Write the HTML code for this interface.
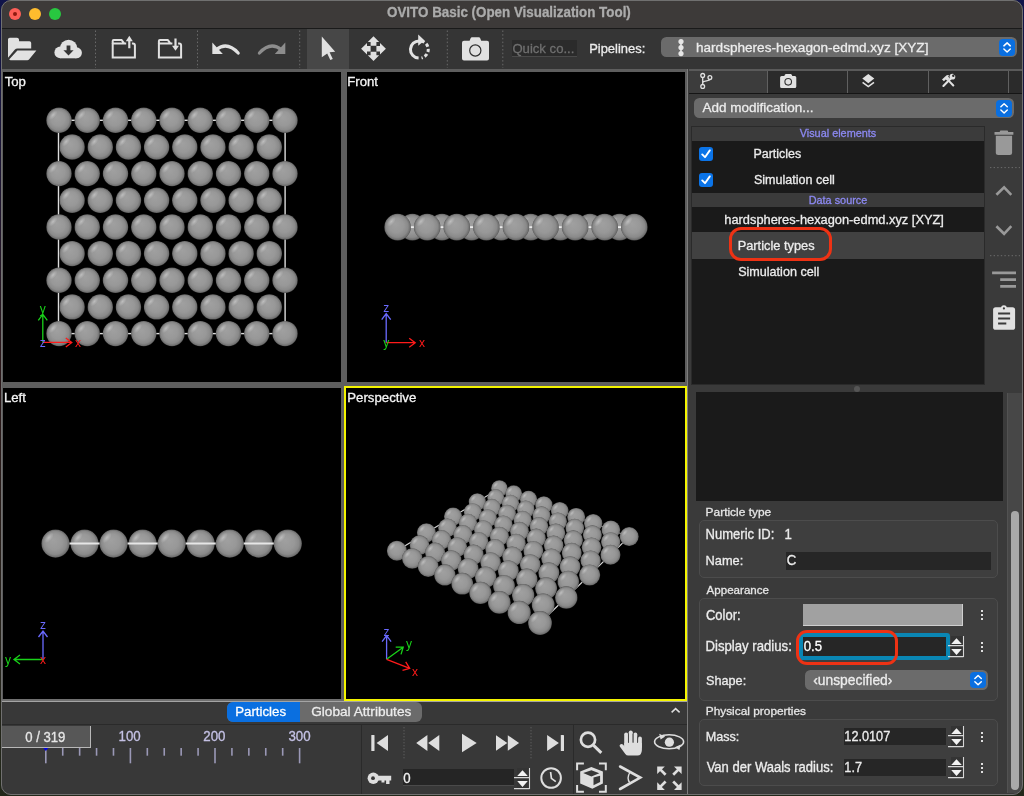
<!DOCTYPE html>
<html><head><meta charset="utf-8"><style>
html,body{margin:0;padding:0;width:1024px;height:796px;overflow:hidden;background:linear-gradient(180deg,#10144a 0%,#2a1618 45%,#22281a 100%)}
.r{position:absolute}
.t{position:absolute;white-space:nowrap;font-family:"Liberation Sans", sans-serif;line-height:16px;-webkit-text-stroke:0.3px currentColor}
#win{position:absolute;left:0;top:0;width:1024px;height:796px;overflow:hidden;border-radius:10px;will-change:transform;clip-path:inset(0 1px 1px 1px round 10px)}
</style></head><body>
<div id="win"><div class="r" style="left:0px;top:0px;width:1024px;height:28px;background:#3d3a39;"></div><div class="r" style="left:0px;top:28px;width:1024px;height:1px;background:#1a1a1a;"></div><div class="r" style="left:9px;top:8px;width:12px;height:12px;border-radius:50%;background:#fe5f57"></div><div class="r" style="left:13px;top:12px;width:4px;height:4px;border-radius:50%;background:#8f1a10"></div><div class="r" style="left:29px;top:8px;width:12px;height:12px;border-radius:50%;background:#febc2e"></div><div class="r" style="left:49px;top:8px;width:12px;height:12px;border-radius:50%;background:#28c840"></div><div class="t" style="left:387.05px;top:5.36px;font-size:13.38px;color:#ababab;font-weight:bold;transform-origin:0 12.64px;transform:scaleY(1.05);">OVITO Basic (Open Visualization Tool)</div><div class="r" style="left:0px;top:29px;width:1024px;height:40px;background:#353535;"></div><svg class="r" style="left:0;top:29px" width="520" height="40" viewBox="0 29 520 40"><path d="M95.5,30.5 L95.5,68" stroke="#6a6a6a" stroke-width="1" stroke-dasharray="1.5 2.2"/><path d="M197.5,30.5 L197.5,68" stroke="#6a6a6a" stroke-width="1" stroke-dasharray="1.5 2.2"/><path d="M299.7,30.5 L299.7,68" stroke="#6a6a6a" stroke-width="1" stroke-dasharray="1.5 2.2"/><path d="M447.3,30.5 L447.3,68" stroke="#6a6a6a" stroke-width="1" stroke-dasharray="1.5 2.2"/><path d="M502.8,30.5 L502.8,68" stroke="#6a6a6a" stroke-width="1" stroke-dasharray="1.5 2.2"/></svg><div class="r" style="left:307px;top:29px;width:41.8px;height:40px;background:#474747;"></div><svg class="r" style="left:0;top:0" width="1024" height="70" viewBox="0 0 1024 70"><path d="M8,39.6 Q8,37.8 9.8,37.8 L17,37.8 Q18.8,37.8 19,39.6 L19.1,41.2 L29.4,41.2 Q31.2,41.2 31.2,43 L31.2,48.4 L17.6,48.4 Q15.8,48.4 14.7,49.8 L8,57.8 Z" fill="#e1e1e1"/><path d="M17.4,50.4 L36.4,50.4 L29.2,59.3 Q28.5,60.2 27.3,60.2 L10.6,60.2 Q8.6,60.2 9.8,58.8 Z" fill="#e1e1e1"/><g fill="#e1e1e1"><circle cx="60.3" cy="52.4" r="5.9"/><circle cx="68.6" cy="48.4" r="8.7"/><circle cx="76.4" cy="52.8" r="5.5"/><rect x="60.3" y="48" width="16.1" height="10.3"/></g><path d="M66.6,45.6 L70.4,45.6 L70.4,50.2 L73.6,50.2 L68.5,55.6 L63.4,50.2 L66.6,50.2 Z" fill="#353535"/><path d="M112.7,43.6 L112.7,57.6 L134.9,57.6 L134.9,45.6 Q134.9,43.6 132.9,43.6 L131.9,43.6" fill="none" stroke="#e1e1e1" stroke-width="2"/><path d="M112.7,44 L112.7,41 Q112.7,40.1 113.7,40.1 L121.7,40.1 L124.3,43.6 L112.7,43.6 M124.3,43.6 L126.2,43.6" fill="none" stroke="#e1e1e1" stroke-width="2" stroke-linejoin="round"/><path d="M129.3,48.2 L129.3,39" stroke="#e1e1e1" stroke-width="2.2"/><path d="M125.8,41.2 L129.3,35.8 L132.8,41.2 Z" fill="#e1e1e1"/><path d="M158.9,43.6 L158.9,57.6 L181.1,57.6 L181.1,45.6 Q181.1,43.6 179.1,43.6 L178.1,43.6" fill="none" stroke="#e1e1e1" stroke-width="2"/><path d="M158.9,44 L158.9,41 Q158.9,40.1 159.9,40.1 L167.9,40.1 L170.5,43.6 L158.9,43.6 M170.5,43.6 L172.4,43.6" fill="none" stroke="#e1e1e1" stroke-width="2" stroke-linejoin="round"/><path d="M175.5,38.5 L175.5,47" stroke="#e1e1e1" stroke-width="2.2"/><path d="M172,45.8 L175.5,50.8 L179,45.8 Z" fill="#e1e1e1"/><path d="M212.3,42.6 L212.3,54.1 L222.8,54.1 Z" fill="#e1e1e1"/><path d="M216.5,49.6 Q227,41 238.2,53" fill="none" stroke="#e1e1e1" stroke-width="3.2" stroke-linecap="round"/><g transform="translate(497.59999999999997,0) scale(-1,1)"><path d="M212.3,42.6 L212.3,54.1 L222.8,54.1 Z" fill="#8d8d8d"/><path d="M216.5,49.6 Q227,41 238.2,53" fill="none" stroke="#8d8d8d" stroke-width="3.2" stroke-linecap="round"/></g><path d="M321.8,36.6 L335.2,51.8 L329.6,52.3 L332.8,58.9 L330.3,60.1 L327.2,53.5 L321.8,57.2 Z" fill="#e1e1e1"/><path d="M373.5,36.3 L379.2,42.1 L376.4,42.1 L376.4,45.7 L370.6,45.7 L370.6,42.1 L367.8,42.1 Z M373.5,61.1 L379.2,55.3 L376.4,55.3 L376.4,51.7 L370.6,51.7 L370.6,55.3 L367.8,55.3 Z M361.1,48.7 L367,43 L367,45.9 L370.6,45.9 L370.6,51.5 L367,51.5 L367,54.4 Z M385.9,48.7 L380,43 L380,45.9 L376.4,45.9 L376.4,51.5 L380,51.5 L380,54.4 Z" fill="#e1e1e1"/><path d="M418.6,58.1 A8.6,8.6 0 0 1 419.5,40.9" fill="none" stroke="#e1e1e1" stroke-width="3"/><path d="M421.5,41.1 A8.6,8.6 0 0 1 421.5,57.9" fill="none" stroke="#e1e1e1" stroke-width="3" stroke-dasharray="3.2 2.2"/><path d="M418.2,34.4 L424.6,40.6 L418.2,45.8 Z" fill="#e1e1e1"/><path d="M464,40.8 L469.6,40.8 L470.6,38.2 Q471,37.2 472,37.2 L478.8,37.2 Q479.8,37.2 480.2,38.2 L481.2,40.8 L487,40.8 Q489,40.8 489,42.8 L489,58.5 Q489,60.5 487,60.5 L464,60.5 Q462,60.5 462,58.5 L462,42.8 Q462,40.8 464,40.8 Z" fill="#e1e1e1"/><circle cx="475.3" cy="50.5" r="5.6" fill="none" stroke="#2e2e2e" stroke-width="1.2"/></svg><div class="r" style="left:0px;top:69px;width:1024px;height:727px;background:#383838;"></div><div class="r" style="left:1px;top:69px;width:687px;height:633px;background:#5e5e5e;"></div><div class="r" style="left:1px;top:698.8px;width:686px;height:1.8px;background:#707070;"></div><div class="r" style="left:1px;top:700.6px;width:686px;height:1.4px;background:#a4a4a4;"></div><div class="r" style="left:3px;top:72px;width:338px;height:310px;background:#000;"></div><div class="r" style="left:347px;top:72px;width:338px;height:310px;background:#000;"></div><div class="r" style="left:3px;top:388px;width:338px;height:310.8px;background:#000;"></div><div class="r" style="left:344px;top:386px;width:343px;height:315px;background:#000;box-sizing:border-box;border:2px solid #f4f400"></div><svg class="r" style="left:0;top:0" width="1024" height="796" viewBox="0 0 1024 796"><defs>
<radialGradient id="sg" cx="0.5" cy="0.5" r="0.5" fx="0.4" fy="0.36">
<stop offset="0" stop-color="#a0a0a0"/>
<stop offset="0.55" stop-color="#989898"/>
<stop offset="0.82" stop-color="#8a8a8a"/>
<stop offset="0.95" stop-color="#707070"/>
<stop offset="1" stop-color="#505050"/>
</radialGradient>
<radialGradient id="hl" cx="0.5" cy="0.5" r="0.5">
<stop offset="0" stop-color="#ffffff" stop-opacity="0.36"/>
<stop offset="0.45" stop-color="#ffffff" stop-opacity="0.18"/>
<stop offset="1" stop-color="#ffffff" stop-opacity="0"/>
</radialGradient>
</defs><clipPath id="c1"><rect x="3" y="72" width="338" height="310"/></clipPath><clipPath id="c2"><rect x="347" y="72" width="338" height="310"/></clipPath><clipPath id="c3"><rect x="3" y="388" width="338" height="310"/></clipPath><clipPath id="c4"><rect x="346" y="388" width="339" height="311"/></clipPath><g clip-path="url(#c1)"><rect x="58.5" y="120.3" width="226.6" height="213.3" fill="none" stroke="#dcdcdc" stroke-width="1.4"/><g transform="translate(59.00,120.30) scale(12.700)"><circle r="1" fill="url(#sg)"/><ellipse cx="-0.47" cy="-0.42" rx="0.46" ry="0.23" transform="rotate(-50 -0.47 -0.42)" fill="url(#hl)"/></g><g transform="translate(87.25,120.30) scale(12.700)"><circle r="1" fill="url(#sg)"/><ellipse cx="-0.47" cy="-0.42" rx="0.46" ry="0.23" transform="rotate(-50 -0.47 -0.42)" fill="url(#hl)"/></g><g transform="translate(115.50,120.30) scale(12.700)"><circle r="1" fill="url(#sg)"/><ellipse cx="-0.47" cy="-0.42" rx="0.46" ry="0.23" transform="rotate(-50 -0.47 -0.42)" fill="url(#hl)"/></g><g transform="translate(143.75,120.30) scale(12.700)"><circle r="1" fill="url(#sg)"/><ellipse cx="-0.47" cy="-0.42" rx="0.46" ry="0.23" transform="rotate(-50 -0.47 -0.42)" fill="url(#hl)"/></g><g transform="translate(172.00,120.30) scale(12.700)"><circle r="1" fill="url(#sg)"/><ellipse cx="-0.47" cy="-0.42" rx="0.46" ry="0.23" transform="rotate(-50 -0.47 -0.42)" fill="url(#hl)"/></g><g transform="translate(200.25,120.30) scale(12.700)"><circle r="1" fill="url(#sg)"/><ellipse cx="-0.47" cy="-0.42" rx="0.46" ry="0.23" transform="rotate(-50 -0.47 -0.42)" fill="url(#hl)"/></g><g transform="translate(228.50,120.30) scale(12.700)"><circle r="1" fill="url(#sg)"/><ellipse cx="-0.47" cy="-0.42" rx="0.46" ry="0.23" transform="rotate(-50 -0.47 -0.42)" fill="url(#hl)"/></g><g transform="translate(256.75,120.30) scale(12.700)"><circle r="1" fill="url(#sg)"/><ellipse cx="-0.47" cy="-0.42" rx="0.46" ry="0.23" transform="rotate(-50 -0.47 -0.42)" fill="url(#hl)"/></g><g transform="translate(285.00,120.30) scale(12.700)"><circle r="1" fill="url(#sg)"/><ellipse cx="-0.47" cy="-0.42" rx="0.46" ry="0.23" transform="rotate(-50 -0.47 -0.42)" fill="url(#hl)"/></g><g transform="translate(72.10,146.96) scale(12.700)"><circle r="1" fill="url(#sg)"/><ellipse cx="-0.47" cy="-0.42" rx="0.46" ry="0.23" transform="rotate(-50 -0.47 -0.42)" fill="url(#hl)"/></g><g transform="translate(100.27,146.96) scale(12.700)"><circle r="1" fill="url(#sg)"/><ellipse cx="-0.47" cy="-0.42" rx="0.46" ry="0.23" transform="rotate(-50 -0.47 -0.42)" fill="url(#hl)"/></g><g transform="translate(128.44,146.96) scale(12.700)"><circle r="1" fill="url(#sg)"/><ellipse cx="-0.47" cy="-0.42" rx="0.46" ry="0.23" transform="rotate(-50 -0.47 -0.42)" fill="url(#hl)"/></g><g transform="translate(156.61,146.96) scale(12.700)"><circle r="1" fill="url(#sg)"/><ellipse cx="-0.47" cy="-0.42" rx="0.46" ry="0.23" transform="rotate(-50 -0.47 -0.42)" fill="url(#hl)"/></g><g transform="translate(184.78,146.96) scale(12.700)"><circle r="1" fill="url(#sg)"/><ellipse cx="-0.47" cy="-0.42" rx="0.46" ry="0.23" transform="rotate(-50 -0.47 -0.42)" fill="url(#hl)"/></g><g transform="translate(212.95,146.96) scale(12.700)"><circle r="1" fill="url(#sg)"/><ellipse cx="-0.47" cy="-0.42" rx="0.46" ry="0.23" transform="rotate(-50 -0.47 -0.42)" fill="url(#hl)"/></g><g transform="translate(241.12,146.96) scale(12.700)"><circle r="1" fill="url(#sg)"/><ellipse cx="-0.47" cy="-0.42" rx="0.46" ry="0.23" transform="rotate(-50 -0.47 -0.42)" fill="url(#hl)"/></g><g transform="translate(269.29,146.96) scale(12.700)"><circle r="1" fill="url(#sg)"/><ellipse cx="-0.47" cy="-0.42" rx="0.46" ry="0.23" transform="rotate(-50 -0.47 -0.42)" fill="url(#hl)"/></g><g transform="translate(59.00,173.62) scale(12.700)"><circle r="1" fill="url(#sg)"/><ellipse cx="-0.47" cy="-0.42" rx="0.46" ry="0.23" transform="rotate(-50 -0.47 -0.42)" fill="url(#hl)"/></g><g transform="translate(87.25,173.62) scale(12.700)"><circle r="1" fill="url(#sg)"/><ellipse cx="-0.47" cy="-0.42" rx="0.46" ry="0.23" transform="rotate(-50 -0.47 -0.42)" fill="url(#hl)"/></g><g transform="translate(115.50,173.62) scale(12.700)"><circle r="1" fill="url(#sg)"/><ellipse cx="-0.47" cy="-0.42" rx="0.46" ry="0.23" transform="rotate(-50 -0.47 -0.42)" fill="url(#hl)"/></g><g transform="translate(143.75,173.62) scale(12.700)"><circle r="1" fill="url(#sg)"/><ellipse cx="-0.47" cy="-0.42" rx="0.46" ry="0.23" transform="rotate(-50 -0.47 -0.42)" fill="url(#hl)"/></g><g transform="translate(172.00,173.62) scale(12.700)"><circle r="1" fill="url(#sg)"/><ellipse cx="-0.47" cy="-0.42" rx="0.46" ry="0.23" transform="rotate(-50 -0.47 -0.42)" fill="url(#hl)"/></g><g transform="translate(200.25,173.62) scale(12.700)"><circle r="1" fill="url(#sg)"/><ellipse cx="-0.47" cy="-0.42" rx="0.46" ry="0.23" transform="rotate(-50 -0.47 -0.42)" fill="url(#hl)"/></g><g transform="translate(228.50,173.62) scale(12.700)"><circle r="1" fill="url(#sg)"/><ellipse cx="-0.47" cy="-0.42" rx="0.46" ry="0.23" transform="rotate(-50 -0.47 -0.42)" fill="url(#hl)"/></g><g transform="translate(256.75,173.62) scale(12.700)"><circle r="1" fill="url(#sg)"/><ellipse cx="-0.47" cy="-0.42" rx="0.46" ry="0.23" transform="rotate(-50 -0.47 -0.42)" fill="url(#hl)"/></g><g transform="translate(285.00,173.62) scale(12.700)"><circle r="1" fill="url(#sg)"/><ellipse cx="-0.47" cy="-0.42" rx="0.46" ry="0.23" transform="rotate(-50 -0.47 -0.42)" fill="url(#hl)"/></g><g transform="translate(72.10,200.28) scale(12.700)"><circle r="1" fill="url(#sg)"/><ellipse cx="-0.47" cy="-0.42" rx="0.46" ry="0.23" transform="rotate(-50 -0.47 -0.42)" fill="url(#hl)"/></g><g transform="translate(100.27,200.28) scale(12.700)"><circle r="1" fill="url(#sg)"/><ellipse cx="-0.47" cy="-0.42" rx="0.46" ry="0.23" transform="rotate(-50 -0.47 -0.42)" fill="url(#hl)"/></g><g transform="translate(128.44,200.28) scale(12.700)"><circle r="1" fill="url(#sg)"/><ellipse cx="-0.47" cy="-0.42" rx="0.46" ry="0.23" transform="rotate(-50 -0.47 -0.42)" fill="url(#hl)"/></g><g transform="translate(156.61,200.28) scale(12.700)"><circle r="1" fill="url(#sg)"/><ellipse cx="-0.47" cy="-0.42" rx="0.46" ry="0.23" transform="rotate(-50 -0.47 -0.42)" fill="url(#hl)"/></g><g transform="translate(184.78,200.28) scale(12.700)"><circle r="1" fill="url(#sg)"/><ellipse cx="-0.47" cy="-0.42" rx="0.46" ry="0.23" transform="rotate(-50 -0.47 -0.42)" fill="url(#hl)"/></g><g transform="translate(212.95,200.28) scale(12.700)"><circle r="1" fill="url(#sg)"/><ellipse cx="-0.47" cy="-0.42" rx="0.46" ry="0.23" transform="rotate(-50 -0.47 -0.42)" fill="url(#hl)"/></g><g transform="translate(241.12,200.28) scale(12.700)"><circle r="1" fill="url(#sg)"/><ellipse cx="-0.47" cy="-0.42" rx="0.46" ry="0.23" transform="rotate(-50 -0.47 -0.42)" fill="url(#hl)"/></g><g transform="translate(269.29,200.28) scale(12.700)"><circle r="1" fill="url(#sg)"/><ellipse cx="-0.47" cy="-0.42" rx="0.46" ry="0.23" transform="rotate(-50 -0.47 -0.42)" fill="url(#hl)"/></g><g transform="translate(59.00,226.94) scale(12.700)"><circle r="1" fill="url(#sg)"/><ellipse cx="-0.47" cy="-0.42" rx="0.46" ry="0.23" transform="rotate(-50 -0.47 -0.42)" fill="url(#hl)"/></g><g transform="translate(87.25,226.94) scale(12.700)"><circle r="1" fill="url(#sg)"/><ellipse cx="-0.47" cy="-0.42" rx="0.46" ry="0.23" transform="rotate(-50 -0.47 -0.42)" fill="url(#hl)"/></g><g transform="translate(115.50,226.94) scale(12.700)"><circle r="1" fill="url(#sg)"/><ellipse cx="-0.47" cy="-0.42" rx="0.46" ry="0.23" transform="rotate(-50 -0.47 -0.42)" fill="url(#hl)"/></g><g transform="translate(143.75,226.94) scale(12.700)"><circle r="1" fill="url(#sg)"/><ellipse cx="-0.47" cy="-0.42" rx="0.46" ry="0.23" transform="rotate(-50 -0.47 -0.42)" fill="url(#hl)"/></g><g transform="translate(172.00,226.94) scale(12.700)"><circle r="1" fill="url(#sg)"/><ellipse cx="-0.47" cy="-0.42" rx="0.46" ry="0.23" transform="rotate(-50 -0.47 -0.42)" fill="url(#hl)"/></g><g transform="translate(200.25,226.94) scale(12.700)"><circle r="1" fill="url(#sg)"/><ellipse cx="-0.47" cy="-0.42" rx="0.46" ry="0.23" transform="rotate(-50 -0.47 -0.42)" fill="url(#hl)"/></g><g transform="translate(228.50,226.94) scale(12.700)"><circle r="1" fill="url(#sg)"/><ellipse cx="-0.47" cy="-0.42" rx="0.46" ry="0.23" transform="rotate(-50 -0.47 -0.42)" fill="url(#hl)"/></g><g transform="translate(256.75,226.94) scale(12.700)"><circle r="1" fill="url(#sg)"/><ellipse cx="-0.47" cy="-0.42" rx="0.46" ry="0.23" transform="rotate(-50 -0.47 -0.42)" fill="url(#hl)"/></g><g transform="translate(285.00,226.94) scale(12.700)"><circle r="1" fill="url(#sg)"/><ellipse cx="-0.47" cy="-0.42" rx="0.46" ry="0.23" transform="rotate(-50 -0.47 -0.42)" fill="url(#hl)"/></g><g transform="translate(72.10,253.60) scale(12.700)"><circle r="1" fill="url(#sg)"/><ellipse cx="-0.47" cy="-0.42" rx="0.46" ry="0.23" transform="rotate(-50 -0.47 -0.42)" fill="url(#hl)"/></g><g transform="translate(100.27,253.60) scale(12.700)"><circle r="1" fill="url(#sg)"/><ellipse cx="-0.47" cy="-0.42" rx="0.46" ry="0.23" transform="rotate(-50 -0.47 -0.42)" fill="url(#hl)"/></g><g transform="translate(128.44,253.60) scale(12.700)"><circle r="1" fill="url(#sg)"/><ellipse cx="-0.47" cy="-0.42" rx="0.46" ry="0.23" transform="rotate(-50 -0.47 -0.42)" fill="url(#hl)"/></g><g transform="translate(156.61,253.60) scale(12.700)"><circle r="1" fill="url(#sg)"/><ellipse cx="-0.47" cy="-0.42" rx="0.46" ry="0.23" transform="rotate(-50 -0.47 -0.42)" fill="url(#hl)"/></g><g transform="translate(184.78,253.60) scale(12.700)"><circle r="1" fill="url(#sg)"/><ellipse cx="-0.47" cy="-0.42" rx="0.46" ry="0.23" transform="rotate(-50 -0.47 -0.42)" fill="url(#hl)"/></g><g transform="translate(212.95,253.60) scale(12.700)"><circle r="1" fill="url(#sg)"/><ellipse cx="-0.47" cy="-0.42" rx="0.46" ry="0.23" transform="rotate(-50 -0.47 -0.42)" fill="url(#hl)"/></g><g transform="translate(241.12,253.60) scale(12.700)"><circle r="1" fill="url(#sg)"/><ellipse cx="-0.47" cy="-0.42" rx="0.46" ry="0.23" transform="rotate(-50 -0.47 -0.42)" fill="url(#hl)"/></g><g transform="translate(269.29,253.60) scale(12.700)"><circle r="1" fill="url(#sg)"/><ellipse cx="-0.47" cy="-0.42" rx="0.46" ry="0.23" transform="rotate(-50 -0.47 -0.42)" fill="url(#hl)"/></g><g transform="translate(59.00,280.26) scale(12.700)"><circle r="1" fill="url(#sg)"/><ellipse cx="-0.47" cy="-0.42" rx="0.46" ry="0.23" transform="rotate(-50 -0.47 -0.42)" fill="url(#hl)"/></g><g transform="translate(87.25,280.26) scale(12.700)"><circle r="1" fill="url(#sg)"/><ellipse cx="-0.47" cy="-0.42" rx="0.46" ry="0.23" transform="rotate(-50 -0.47 -0.42)" fill="url(#hl)"/></g><g transform="translate(115.50,280.26) scale(12.700)"><circle r="1" fill="url(#sg)"/><ellipse cx="-0.47" cy="-0.42" rx="0.46" ry="0.23" transform="rotate(-50 -0.47 -0.42)" fill="url(#hl)"/></g><g transform="translate(143.75,280.26) scale(12.700)"><circle r="1" fill="url(#sg)"/><ellipse cx="-0.47" cy="-0.42" rx="0.46" ry="0.23" transform="rotate(-50 -0.47 -0.42)" fill="url(#hl)"/></g><g transform="translate(172.00,280.26) scale(12.700)"><circle r="1" fill="url(#sg)"/><ellipse cx="-0.47" cy="-0.42" rx="0.46" ry="0.23" transform="rotate(-50 -0.47 -0.42)" fill="url(#hl)"/></g><g transform="translate(200.25,280.26) scale(12.700)"><circle r="1" fill="url(#sg)"/><ellipse cx="-0.47" cy="-0.42" rx="0.46" ry="0.23" transform="rotate(-50 -0.47 -0.42)" fill="url(#hl)"/></g><g transform="translate(228.50,280.26) scale(12.700)"><circle r="1" fill="url(#sg)"/><ellipse cx="-0.47" cy="-0.42" rx="0.46" ry="0.23" transform="rotate(-50 -0.47 -0.42)" fill="url(#hl)"/></g><g transform="translate(256.75,280.26) scale(12.700)"><circle r="1" fill="url(#sg)"/><ellipse cx="-0.47" cy="-0.42" rx="0.46" ry="0.23" transform="rotate(-50 -0.47 -0.42)" fill="url(#hl)"/></g><g transform="translate(285.00,280.26) scale(12.700)"><circle r="1" fill="url(#sg)"/><ellipse cx="-0.47" cy="-0.42" rx="0.46" ry="0.23" transform="rotate(-50 -0.47 -0.42)" fill="url(#hl)"/></g><g transform="translate(72.10,306.92) scale(12.700)"><circle r="1" fill="url(#sg)"/><ellipse cx="-0.47" cy="-0.42" rx="0.46" ry="0.23" transform="rotate(-50 -0.47 -0.42)" fill="url(#hl)"/></g><g transform="translate(100.27,306.92) scale(12.700)"><circle r="1" fill="url(#sg)"/><ellipse cx="-0.47" cy="-0.42" rx="0.46" ry="0.23" transform="rotate(-50 -0.47 -0.42)" fill="url(#hl)"/></g><g transform="translate(128.44,306.92) scale(12.700)"><circle r="1" fill="url(#sg)"/><ellipse cx="-0.47" cy="-0.42" rx="0.46" ry="0.23" transform="rotate(-50 -0.47 -0.42)" fill="url(#hl)"/></g><g transform="translate(156.61,306.92) scale(12.700)"><circle r="1" fill="url(#sg)"/><ellipse cx="-0.47" cy="-0.42" rx="0.46" ry="0.23" transform="rotate(-50 -0.47 -0.42)" fill="url(#hl)"/></g><g transform="translate(184.78,306.92) scale(12.700)"><circle r="1" fill="url(#sg)"/><ellipse cx="-0.47" cy="-0.42" rx="0.46" ry="0.23" transform="rotate(-50 -0.47 -0.42)" fill="url(#hl)"/></g><g transform="translate(212.95,306.92) scale(12.700)"><circle r="1" fill="url(#sg)"/><ellipse cx="-0.47" cy="-0.42" rx="0.46" ry="0.23" transform="rotate(-50 -0.47 -0.42)" fill="url(#hl)"/></g><g transform="translate(241.12,306.92) scale(12.700)"><circle r="1" fill="url(#sg)"/><ellipse cx="-0.47" cy="-0.42" rx="0.46" ry="0.23" transform="rotate(-50 -0.47 -0.42)" fill="url(#hl)"/></g><g transform="translate(269.29,306.92) scale(12.700)"><circle r="1" fill="url(#sg)"/><ellipse cx="-0.47" cy="-0.42" rx="0.46" ry="0.23" transform="rotate(-50 -0.47 -0.42)" fill="url(#hl)"/></g><g transform="translate(59.00,333.58) scale(12.700)"><circle r="1" fill="url(#sg)"/><ellipse cx="-0.47" cy="-0.42" rx="0.46" ry="0.23" transform="rotate(-50 -0.47 -0.42)" fill="url(#hl)"/></g><g transform="translate(87.25,333.58) scale(12.700)"><circle r="1" fill="url(#sg)"/><ellipse cx="-0.47" cy="-0.42" rx="0.46" ry="0.23" transform="rotate(-50 -0.47 -0.42)" fill="url(#hl)"/></g><g transform="translate(115.50,333.58) scale(12.700)"><circle r="1" fill="url(#sg)"/><ellipse cx="-0.47" cy="-0.42" rx="0.46" ry="0.23" transform="rotate(-50 -0.47 -0.42)" fill="url(#hl)"/></g><g transform="translate(143.75,333.58) scale(12.700)"><circle r="1" fill="url(#sg)"/><ellipse cx="-0.47" cy="-0.42" rx="0.46" ry="0.23" transform="rotate(-50 -0.47 -0.42)" fill="url(#hl)"/></g><g transform="translate(172.00,333.58) scale(12.700)"><circle r="1" fill="url(#sg)"/><ellipse cx="-0.47" cy="-0.42" rx="0.46" ry="0.23" transform="rotate(-50 -0.47 -0.42)" fill="url(#hl)"/></g><g transform="translate(200.25,333.58) scale(12.700)"><circle r="1" fill="url(#sg)"/><ellipse cx="-0.47" cy="-0.42" rx="0.46" ry="0.23" transform="rotate(-50 -0.47 -0.42)" fill="url(#hl)"/></g><g transform="translate(228.50,333.58) scale(12.700)"><circle r="1" fill="url(#sg)"/><ellipse cx="-0.47" cy="-0.42" rx="0.46" ry="0.23" transform="rotate(-50 -0.47 -0.42)" fill="url(#hl)"/></g><g transform="translate(256.75,333.58) scale(12.700)"><circle r="1" fill="url(#sg)"/><ellipse cx="-0.47" cy="-0.42" rx="0.46" ry="0.23" transform="rotate(-50 -0.47 -0.42)" fill="url(#hl)"/></g><g transform="translate(285.00,333.58) scale(12.700)"><circle r="1" fill="url(#sg)"/><ellipse cx="-0.47" cy="-0.42" rx="0.46" ry="0.23" transform="rotate(-50 -0.47 -0.42)" fill="url(#hl)"/></g><path d="M42.8,342.4 L42.8,314.4 M47.3,320.4 L42.8,314.4 L38.3,320.4" stroke="#19d219" stroke-width="1.3" fill="none"/><text x="42.8" y="313" fill="#19d219" font-size="12" font-family="Liberation Sans" text-anchor="middle">y</text><path d="M42.8,342.4 L71.8,342.4 M65.8,346.9 L71.8,342.4 L65.8,337.9" stroke="#ff1a1a" stroke-width="1.3" fill="none"/><text x="78" y="346.5" fill="#ff1a1a" font-size="12" font-family="Liberation Sans" text-anchor="middle">x</text><text x="42.8" y="346.5" fill="#6a6aff" font-size="12" font-family="Liberation Sans" text-anchor="middle">z</text></g><g clip-path="url(#c2)"><g transform="translate(412.39,227.10) scale(13.300)"><circle r="1" fill="url(#sg)"/><ellipse cx="-0.47" cy="-0.42" rx="0.46" ry="0.23" transform="rotate(-50 -0.47 -0.42)" fill="url(#hl)"/></g><g transform="translate(441.98,227.10) scale(13.300)"><circle r="1" fill="url(#sg)"/><ellipse cx="-0.47" cy="-0.42" rx="0.46" ry="0.23" transform="rotate(-50 -0.47 -0.42)" fill="url(#hl)"/></g><g transform="translate(471.57,227.10) scale(13.300)"><circle r="1" fill="url(#sg)"/><ellipse cx="-0.47" cy="-0.42" rx="0.46" ry="0.23" transform="rotate(-50 -0.47 -0.42)" fill="url(#hl)"/></g><g transform="translate(501.16,227.10) scale(13.300)"><circle r="1" fill="url(#sg)"/><ellipse cx="-0.47" cy="-0.42" rx="0.46" ry="0.23" transform="rotate(-50 -0.47 -0.42)" fill="url(#hl)"/></g><g transform="translate(530.74,227.10) scale(13.300)"><circle r="1" fill="url(#sg)"/><ellipse cx="-0.47" cy="-0.42" rx="0.46" ry="0.23" transform="rotate(-50 -0.47 -0.42)" fill="url(#hl)"/></g><g transform="translate(560.33,227.10) scale(13.300)"><circle r="1" fill="url(#sg)"/><ellipse cx="-0.47" cy="-0.42" rx="0.46" ry="0.23" transform="rotate(-50 -0.47 -0.42)" fill="url(#hl)"/></g><g transform="translate(589.92,227.10) scale(13.300)"><circle r="1" fill="url(#sg)"/><ellipse cx="-0.47" cy="-0.42" rx="0.46" ry="0.23" transform="rotate(-50 -0.47 -0.42)" fill="url(#hl)"/></g><g transform="translate(619.51,227.10) scale(13.300)"><circle r="1" fill="url(#sg)"/><ellipse cx="-0.47" cy="-0.42" rx="0.46" ry="0.23" transform="rotate(-50 -0.47 -0.42)" fill="url(#hl)"/></g><line x1="397.6" y1="227.1" x2="634.3" y2="227.1" stroke="#ececec" stroke-width="1.8"/><g transform="translate(397.60,227.10) scale(13.300)"><circle r="1" fill="url(#sg)"/><ellipse cx="-0.47" cy="-0.42" rx="0.46" ry="0.23" transform="rotate(-50 -0.47 -0.42)" fill="url(#hl)"/></g><g transform="translate(427.19,227.10) scale(13.300)"><circle r="1" fill="url(#sg)"/><ellipse cx="-0.47" cy="-0.42" rx="0.46" ry="0.23" transform="rotate(-50 -0.47 -0.42)" fill="url(#hl)"/></g><g transform="translate(456.77,227.10) scale(13.300)"><circle r="1" fill="url(#sg)"/><ellipse cx="-0.47" cy="-0.42" rx="0.46" ry="0.23" transform="rotate(-50 -0.47 -0.42)" fill="url(#hl)"/></g><g transform="translate(486.36,227.10) scale(13.300)"><circle r="1" fill="url(#sg)"/><ellipse cx="-0.47" cy="-0.42" rx="0.46" ry="0.23" transform="rotate(-50 -0.47 -0.42)" fill="url(#hl)"/></g><g transform="translate(515.95,227.10) scale(13.300)"><circle r="1" fill="url(#sg)"/><ellipse cx="-0.47" cy="-0.42" rx="0.46" ry="0.23" transform="rotate(-50 -0.47 -0.42)" fill="url(#hl)"/></g><g transform="translate(545.54,227.10) scale(13.300)"><circle r="1" fill="url(#sg)"/><ellipse cx="-0.47" cy="-0.42" rx="0.46" ry="0.23" transform="rotate(-50 -0.47 -0.42)" fill="url(#hl)"/></g><g transform="translate(575.12,227.10) scale(13.300)"><circle r="1" fill="url(#sg)"/><ellipse cx="-0.47" cy="-0.42" rx="0.46" ry="0.23" transform="rotate(-50 -0.47 -0.42)" fill="url(#hl)"/></g><g transform="translate(604.71,227.10) scale(13.300)"><circle r="1" fill="url(#sg)"/><ellipse cx="-0.47" cy="-0.42" rx="0.46" ry="0.23" transform="rotate(-50 -0.47 -0.42)" fill="url(#hl)"/></g><g transform="translate(634.30,227.10) scale(13.300)"><circle r="1" fill="url(#sg)"/><ellipse cx="-0.47" cy="-0.42" rx="0.46" ry="0.23" transform="rotate(-50 -0.47 -0.42)" fill="url(#hl)"/></g><path d="M386.2,342.7 L386.2,313.7 M390.7,319.7 L386.2,313.7 L381.7,319.7" stroke="#6a6aff" stroke-width="1.3" fill="none"/><text x="386.2" y="312" fill="#6a6aff" font-size="12" font-family="Liberation Sans" text-anchor="middle">z</text><path d="M386.2,342.7 L415.2,342.7 M409.2,347.2 L415.2,342.7 L409.2,338.2" stroke="#ff1a1a" stroke-width="1.3" fill="none"/><text x="422" y="347" fill="#ff1a1a" font-size="12" font-family="Liberation Sans" text-anchor="middle">x</text><text x="386.2" y="347" fill="#19d219" font-size="12" font-family="Liberation Sans" text-anchor="middle">y</text></g><g clip-path="url(#c3)"><g transform="translate(84.54,543.60) scale(14.100)"><circle r="1" fill="url(#sg)"/><ellipse cx="-0.47" cy="-0.42" rx="0.46" ry="0.23" transform="rotate(-50 -0.47 -0.42)" fill="url(#hl)"/></g><g transform="translate(142.61,543.60) scale(14.100)"><circle r="1" fill="url(#sg)"/><ellipse cx="-0.47" cy="-0.42" rx="0.46" ry="0.23" transform="rotate(-50 -0.47 -0.42)" fill="url(#hl)"/></g><g transform="translate(200.69,543.60) scale(14.100)"><circle r="1" fill="url(#sg)"/><ellipse cx="-0.47" cy="-0.42" rx="0.46" ry="0.23" transform="rotate(-50 -0.47 -0.42)" fill="url(#hl)"/></g><g transform="translate(258.76,543.60) scale(14.100)"><circle r="1" fill="url(#sg)"/><ellipse cx="-0.47" cy="-0.42" rx="0.46" ry="0.23" transform="rotate(-50 -0.47 -0.42)" fill="url(#hl)"/></g><line x1="55.5" y1="543.6" x2="287.8" y2="543.6" stroke="#e6e6e6" stroke-width="2"/><g transform="translate(55.50,543.60) scale(14.100)"><circle r="1" fill="url(#sg)"/><ellipse cx="-0.47" cy="-0.42" rx="0.46" ry="0.23" transform="rotate(-50 -0.47 -0.42)" fill="url(#hl)"/></g><g transform="translate(113.58,543.60) scale(14.100)"><circle r="1" fill="url(#sg)"/><ellipse cx="-0.47" cy="-0.42" rx="0.46" ry="0.23" transform="rotate(-50 -0.47 -0.42)" fill="url(#hl)"/></g><g transform="translate(171.65,543.60) scale(14.100)"><circle r="1" fill="url(#sg)"/><ellipse cx="-0.47" cy="-0.42" rx="0.46" ry="0.23" transform="rotate(-50 -0.47 -0.42)" fill="url(#hl)"/></g><g transform="translate(229.73,543.60) scale(14.100)"><circle r="1" fill="url(#sg)"/><ellipse cx="-0.47" cy="-0.42" rx="0.46" ry="0.23" transform="rotate(-50 -0.47 -0.42)" fill="url(#hl)"/></g><g transform="translate(287.80,543.60) scale(14.100)"><circle r="1" fill="url(#sg)"/><ellipse cx="-0.47" cy="-0.42" rx="0.46" ry="0.23" transform="rotate(-50 -0.47 -0.42)" fill="url(#hl)"/></g><path d="M43,659.5 L43.0,631.0 M47.5,637.0 L43.0,631.0 L38.5,637.0" stroke="#6a6aff" stroke-width="1.3" fill="none"/><text x="43" y="629" fill="#6a6aff" font-size="12" font-family="Liberation Sans" text-anchor="middle">z</text><path d="M43,659.5 L14.0,659.5 M20.0,655.0 L14.0,659.5 L20.0,664.0" stroke="#19d219" stroke-width="1.3" fill="none"/><text x="8" y="663.5" fill="#19d219" font-size="12" font-family="Liberation Sans" text-anchor="middle">y</text><text x="43" y="663.5" fill="#ff1a1a" font-size="12" font-family="Liberation Sans" text-anchor="middle">x</text></g><g clip-path="url(#c4)"><polygon points="396.9,550.7 540.0,623.0 629.2,536.6 499.4,488.4" fill="none" stroke="#d8d8d8" stroke-width="1.1"/><g transform="translate(499.40,488.40) scale(8.240)"><circle r="1" fill="url(#sg)"/><ellipse cx="-0.47" cy="-0.42" rx="0.46" ry="0.23" transform="rotate(-50 -0.47 -0.42)" fill="url(#hl)"/></g><g transform="translate(513.72,493.72) scale(8.379)"><circle r="1" fill="url(#sg)"/><ellipse cx="-0.47" cy="-0.42" rx="0.46" ry="0.23" transform="rotate(-50 -0.47 -0.42)" fill="url(#hl)"/></g><g transform="translate(495.76,497.72) scale(8.497)"><circle r="1" fill="url(#sg)"/><ellipse cx="-0.47" cy="-0.42" rx="0.46" ry="0.23" transform="rotate(-50 -0.47 -0.42)" fill="url(#hl)"/></g><g transform="translate(528.52,499.21) scale(8.522)"><circle r="1" fill="url(#sg)"/><ellipse cx="-0.47" cy="-0.42" rx="0.46" ry="0.23" transform="rotate(-50 -0.47 -0.42)" fill="url(#hl)"/></g><g transform="translate(477.30,501.83) scale(8.618)"><circle r="1" fill="url(#sg)"/><ellipse cx="-0.47" cy="-0.42" rx="0.46" ry="0.23" transform="rotate(-50 -0.47 -0.42)" fill="url(#hl)"/></g><g transform="translate(510.47,503.36) scale(8.644)"><circle r="1" fill="url(#sg)"/><ellipse cx="-0.47" cy="-0.42" rx="0.46" ry="0.23" transform="rotate(-50 -0.47 -0.42)" fill="url(#hl)"/></g><g transform="translate(543.84,504.90) scale(8.670)"><circle r="1" fill="url(#sg)"/><ellipse cx="-0.47" cy="-0.42" rx="0.46" ry="0.23" transform="rotate(-50 -0.47 -0.42)" fill="url(#hl)"/></g><g transform="translate(491.90,507.63) scale(8.769)"><circle r="1" fill="url(#sg)"/><ellipse cx="-0.47" cy="-0.42" rx="0.46" ry="0.23" transform="rotate(-50 -0.47 -0.42)" fill="url(#hl)"/></g><g transform="translate(525.70,509.21) scale(8.796)"><circle r="1" fill="url(#sg)"/><ellipse cx="-0.47" cy="-0.42" rx="0.46" ry="0.23" transform="rotate(-50 -0.47 -0.42)" fill="url(#hl)"/></g><g transform="translate(559.71,510.79) scale(8.823)"><circle r="1" fill="url(#sg)"/><ellipse cx="-0.47" cy="-0.42" rx="0.46" ry="0.23" transform="rotate(-50 -0.47 -0.42)" fill="url(#hl)"/></g><g transform="translate(472.77,512.03) scale(8.899)"><circle r="1" fill="url(#sg)"/><ellipse cx="-0.47" cy="-0.42" rx="0.46" ry="0.23" transform="rotate(-50 -0.47 -0.42)" fill="url(#hl)"/></g><g transform="translate(507.01,513.64) scale(8.926)"><circle r="1" fill="url(#sg)"/><ellipse cx="-0.47" cy="-0.42" rx="0.46" ry="0.23" transform="rotate(-50 -0.47 -0.42)" fill="url(#hl)"/></g><g transform="translate(541.47,515.26) scale(8.954)"><circle r="1" fill="url(#sg)"/><ellipse cx="-0.47" cy="-0.42" rx="0.46" ry="0.23" transform="rotate(-50 -0.47 -0.42)" fill="url(#hl)"/></g><g transform="translate(576.14,516.90) scale(8.982)"><circle r="1" fill="url(#sg)"/><ellipse cx="-0.47" cy="-0.42" rx="0.46" ry="0.23" transform="rotate(-50 -0.47 -0.42)" fill="url(#hl)"/></g><g transform="translate(453.08,516.56) scale(9.032)"><circle r="1" fill="url(#sg)"/><ellipse cx="-0.47" cy="-0.42" rx="0.46" ry="0.23" transform="rotate(-50 -0.47 -0.42)" fill="url(#hl)"/></g><g transform="translate(487.77,518.21) scale(9.061)"><circle r="1" fill="url(#sg)"/><ellipse cx="-0.47" cy="-0.42" rx="0.46" ry="0.23" transform="rotate(-50 -0.47 -0.42)" fill="url(#hl)"/></g><g transform="translate(522.68,519.87) scale(9.089)"><circle r="1" fill="url(#sg)"/><ellipse cx="-0.47" cy="-0.42" rx="0.46" ry="0.23" transform="rotate(-50 -0.47 -0.42)" fill="url(#hl)"/></g><g transform="translate(557.82,521.54) scale(9.118)"><circle r="1" fill="url(#sg)"/><ellipse cx="-0.47" cy="-0.42" rx="0.46" ry="0.23" transform="rotate(-50 -0.47 -0.42)" fill="url(#hl)"/></g><g transform="translate(593.18,523.22) scale(9.147)"><circle r="1" fill="url(#sg)"/><ellipse cx="-0.47" cy="-0.42" rx="0.46" ry="0.23" transform="rotate(-50 -0.47 -0.42)" fill="url(#hl)"/></g><g transform="translate(467.94,522.91) scale(9.199)"><circle r="1" fill="url(#sg)"/><ellipse cx="-0.47" cy="-0.42" rx="0.46" ry="0.23" transform="rotate(-50 -0.47 -0.42)" fill="url(#hl)"/></g><g transform="translate(503.32,524.61) scale(9.228)"><circle r="1" fill="url(#sg)"/><ellipse cx="-0.47" cy="-0.42" rx="0.46" ry="0.23" transform="rotate(-50 -0.47 -0.42)" fill="url(#hl)"/></g><g transform="translate(538.93,526.33) scale(9.258)"><circle r="1" fill="url(#sg)"/><ellipse cx="-0.47" cy="-0.42" rx="0.46" ry="0.23" transform="rotate(-50 -0.47 -0.42)" fill="url(#hl)"/></g><g transform="translate(574.78,528.05) scale(9.288)"><circle r="1" fill="url(#sg)"/><ellipse cx="-0.47" cy="-0.42" rx="0.46" ry="0.23" transform="rotate(-50 -0.47 -0.42)" fill="url(#hl)"/></g><g transform="translate(610.85,529.79) scale(9.318)"><circle r="1" fill="url(#sg)"/><ellipse cx="-0.47" cy="-0.42" rx="0.46" ry="0.23" transform="rotate(-50 -0.47 -0.42)" fill="url(#hl)"/></g><g transform="translate(447.49,527.76) scale(9.341)"><circle r="1" fill="url(#sg)"/><ellipse cx="-0.47" cy="-0.42" rx="0.46" ry="0.23" transform="rotate(-50 -0.47 -0.42)" fill="url(#hl)"/></g><g transform="translate(483.36,529.51) scale(9.372)"><circle r="1" fill="url(#sg)"/><ellipse cx="-0.47" cy="-0.42" rx="0.46" ry="0.23" transform="rotate(-50 -0.47 -0.42)" fill="url(#hl)"/></g><g transform="translate(519.46,531.26) scale(9.402)"><circle r="1" fill="url(#sg)"/><ellipse cx="-0.47" cy="-0.42" rx="0.46" ry="0.23" transform="rotate(-50 -0.47 -0.42)" fill="url(#hl)"/></g><g transform="translate(555.80,533.03) scale(9.433)"><circle r="1" fill="url(#sg)"/><ellipse cx="-0.47" cy="-0.42" rx="0.46" ry="0.23" transform="rotate(-50 -0.47 -0.42)" fill="url(#hl)"/></g><g transform="translate(592.38,534.81) scale(9.464)"><circle r="1" fill="url(#sg)"/><ellipse cx="-0.47" cy="-0.42" rx="0.46" ry="0.23" transform="rotate(-50 -0.47 -0.42)" fill="url(#hl)"/></g><g transform="translate(426.41,532.77) scale(9.488)"><circle r="1" fill="url(#sg)"/><ellipse cx="-0.47" cy="-0.42" rx="0.46" ry="0.23" transform="rotate(-50 -0.47 -0.42)" fill="url(#hl)"/></g><g transform="translate(629.20,536.60) scale(9.495)"><circle r="1" fill="url(#sg)"/><ellipse cx="-0.47" cy="-0.42" rx="0.46" ry="0.23" transform="rotate(-50 -0.47 -0.42)" fill="url(#hl)"/></g><g transform="translate(462.77,534.55) scale(9.519)"><circle r="1" fill="url(#sg)"/><ellipse cx="-0.47" cy="-0.42" rx="0.46" ry="0.23" transform="rotate(-50 -0.47 -0.42)" fill="url(#hl)"/></g><g transform="translate(499.37,536.36) scale(9.551)"><circle r="1" fill="url(#sg)"/><ellipse cx="-0.47" cy="-0.42" rx="0.46" ry="0.23" transform="rotate(-50 -0.47 -0.42)" fill="url(#hl)"/></g><g transform="translate(536.22,538.17) scale(9.583)"><circle r="1" fill="url(#sg)"/><ellipse cx="-0.47" cy="-0.42" rx="0.46" ry="0.23" transform="rotate(-50 -0.47 -0.42)" fill="url(#hl)"/></g><g transform="translate(573.32,539.99) scale(9.615)"><circle r="1" fill="url(#sg)"/><ellipse cx="-0.47" cy="-0.42" rx="0.46" ry="0.23" transform="rotate(-50 -0.47 -0.42)" fill="url(#hl)"/></g><g transform="translate(610.66,541.83) scale(9.647)"><circle r="1" fill="url(#sg)"/><ellipse cx="-0.47" cy="-0.42" rx="0.46" ry="0.23" transform="rotate(-50 -0.47 -0.42)" fill="url(#hl)"/></g><g transform="translate(441.52,539.76) scale(9.672)"><circle r="1" fill="url(#sg)"/><ellipse cx="-0.47" cy="-0.42" rx="0.46" ry="0.23" transform="rotate(-50 -0.47 -0.42)" fill="url(#hl)"/></g><g transform="translate(478.64,541.61) scale(9.705)"><circle r="1" fill="url(#sg)"/><ellipse cx="-0.47" cy="-0.42" rx="0.46" ry="0.23" transform="rotate(-50 -0.47 -0.42)" fill="url(#hl)"/></g><g transform="translate(516.01,543.47) scale(9.738)"><circle r="1" fill="url(#sg)"/><ellipse cx="-0.47" cy="-0.42" rx="0.46" ry="0.23" transform="rotate(-50 -0.47 -0.42)" fill="url(#hl)"/></g><g transform="translate(553.64,545.34) scale(9.771)"><circle r="1" fill="url(#sg)"/><ellipse cx="-0.47" cy="-0.42" rx="0.46" ry="0.23" transform="rotate(-50 -0.47 -0.42)" fill="url(#hl)"/></g><g transform="translate(591.52,547.23) scale(9.804)"><circle r="1" fill="url(#sg)"/><ellipse cx="-0.47" cy="-0.42" rx="0.46" ry="0.23" transform="rotate(-50 -0.47 -0.42)" fill="url(#hl)"/></g><g transform="translate(419.57,545.14) scale(9.830)"><circle r="1" fill="url(#sg)"/><ellipse cx="-0.47" cy="-0.42" rx="0.46" ry="0.23" transform="rotate(-50 -0.47 -0.42)" fill="url(#hl)"/></g><g transform="translate(457.22,547.04) scale(9.863)"><circle r="1" fill="url(#sg)"/><ellipse cx="-0.47" cy="-0.42" rx="0.46" ry="0.23" transform="rotate(-50 -0.47 -0.42)" fill="url(#hl)"/></g><g transform="translate(495.14,548.95) scale(9.897)"><circle r="1" fill="url(#sg)"/><ellipse cx="-0.47" cy="-0.42" rx="0.46" ry="0.23" transform="rotate(-50 -0.47 -0.42)" fill="url(#hl)"/></g><g transform="translate(533.31,550.87) scale(9.931)"><circle r="1" fill="url(#sg)"/><ellipse cx="-0.47" cy="-0.42" rx="0.46" ry="0.23" transform="rotate(-50 -0.47 -0.42)" fill="url(#hl)"/></g><g transform="translate(571.75,552.80) scale(9.966)"><circle r="1" fill="url(#sg)"/><ellipse cx="-0.47" cy="-0.42" rx="0.46" ry="0.23" transform="rotate(-50 -0.47 -0.42)" fill="url(#hl)"/></g><g transform="translate(396.90,550.70) scale(9.992)"><circle r="1" fill="url(#sg)"/><ellipse cx="-0.47" cy="-0.42" rx="0.46" ry="0.23" transform="rotate(-50 -0.47 -0.42)" fill="url(#hl)"/></g><g transform="translate(610.46,554.75) scale(10.001)"><circle r="1" fill="url(#sg)"/><ellipse cx="-0.47" cy="-0.42" rx="0.46" ry="0.23" transform="rotate(-50 -0.47 -0.42)" fill="url(#hl)"/></g><g transform="translate(435.10,552.65) scale(10.027)"><circle r="1" fill="url(#sg)"/><ellipse cx="-0.47" cy="-0.42" rx="0.46" ry="0.23" transform="rotate(-50 -0.47 -0.42)" fill="url(#hl)"/></g><g transform="translate(473.57,554.61) scale(10.062)"><circle r="1" fill="url(#sg)"/><ellipse cx="-0.47" cy="-0.42" rx="0.46" ry="0.23" transform="rotate(-50 -0.47 -0.42)" fill="url(#hl)"/></g><g transform="translate(512.30,556.58) scale(10.098)"><circle r="1" fill="url(#sg)"/><ellipse cx="-0.47" cy="-0.42" rx="0.46" ry="0.23" transform="rotate(-50 -0.47 -0.42)" fill="url(#hl)"/></g><g transform="translate(551.32,558.57) scale(10.133)"><circle r="1" fill="url(#sg)"/><ellipse cx="-0.47" cy="-0.42" rx="0.46" ry="0.23" transform="rotate(-50 -0.47 -0.42)" fill="url(#hl)"/></g><g transform="translate(590.60,560.57) scale(10.169)"><circle r="1" fill="url(#sg)"/><ellipse cx="-0.47" cy="-0.42" rx="0.46" ry="0.23" transform="rotate(-50 -0.47 -0.42)" fill="url(#hl)"/></g><g transform="translate(412.23,558.44) scale(10.197)"><circle r="1" fill="url(#sg)"/><ellipse cx="-0.47" cy="-0.42" rx="0.46" ry="0.23" transform="rotate(-50 -0.47 -0.42)" fill="url(#hl)"/></g><g transform="translate(451.27,560.46) scale(10.233)"><circle r="1" fill="url(#sg)"/><ellipse cx="-0.47" cy="-0.42" rx="0.46" ry="0.23" transform="rotate(-50 -0.47 -0.42)" fill="url(#hl)"/></g><g transform="translate(490.58,562.49) scale(10.270)"><circle r="1" fill="url(#sg)"/><ellipse cx="-0.47" cy="-0.42" rx="0.46" ry="0.23" transform="rotate(-50 -0.47 -0.42)" fill="url(#hl)"/></g><g transform="translate(530.18,564.53) scale(10.306)"><circle r="1" fill="url(#sg)"/><ellipse cx="-0.47" cy="-0.42" rx="0.46" ry="0.23" transform="rotate(-50 -0.47 -0.42)" fill="url(#hl)"/></g><g transform="translate(570.07,566.59) scale(10.344)"><circle r="1" fill="url(#sg)"/><ellipse cx="-0.47" cy="-0.42" rx="0.46" ry="0.23" transform="rotate(-50 -0.47 -0.42)" fill="url(#hl)"/></g><g transform="translate(428.19,566.51) scale(10.409)"><circle r="1" fill="url(#sg)"/><ellipse cx="-0.47" cy="-0.42" rx="0.46" ry="0.23" transform="rotate(-50 -0.47 -0.42)" fill="url(#hl)"/></g><g transform="translate(468.11,568.60) scale(10.447)"><circle r="1" fill="url(#sg)"/><ellipse cx="-0.47" cy="-0.42" rx="0.46" ry="0.23" transform="rotate(-50 -0.47 -0.42)" fill="url(#hl)"/></g><g transform="translate(508.31,570.70) scale(10.485)"><circle r="1" fill="url(#sg)"/><ellipse cx="-0.47" cy="-0.42" rx="0.46" ry="0.23" transform="rotate(-50 -0.47 -0.42)" fill="url(#hl)"/></g><g transform="translate(548.81,572.81) scale(10.524)"><circle r="1" fill="url(#sg)"/><ellipse cx="-0.47" cy="-0.42" rx="0.46" ry="0.23" transform="rotate(-50 -0.47 -0.42)" fill="url(#hl)"/></g><g transform="translate(589.61,574.94) scale(10.563)"><circle r="1" fill="url(#sg)"/><ellipse cx="-0.47" cy="-0.42" rx="0.46" ry="0.23" transform="rotate(-50 -0.47 -0.42)" fill="url(#hl)"/></g><g transform="translate(444.84,574.92) scale(10.631)"><circle r="1" fill="url(#sg)"/><ellipse cx="-0.47" cy="-0.42" rx="0.46" ry="0.23" transform="rotate(-50 -0.47 -0.42)" fill="url(#hl)"/></g><g transform="translate(485.67,577.08) scale(10.671)"><circle r="1" fill="url(#sg)"/><ellipse cx="-0.47" cy="-0.42" rx="0.46" ry="0.23" transform="rotate(-50 -0.47 -0.42)" fill="url(#hl)"/></g><g transform="translate(526.81,579.26) scale(10.711)"><circle r="1" fill="url(#sg)"/><ellipse cx="-0.47" cy="-0.42" rx="0.46" ry="0.23" transform="rotate(-50 -0.47 -0.42)" fill="url(#hl)"/></g><g transform="translate(568.25,581.45) scale(10.751)"><circle r="1" fill="url(#sg)"/><ellipse cx="-0.47" cy="-0.42" rx="0.46" ry="0.23" transform="rotate(-50 -0.47 -0.42)" fill="url(#hl)"/></g><g transform="translate(462.22,583.70) scale(10.863)"><circle r="1" fill="url(#sg)"/><ellipse cx="-0.47" cy="-0.42" rx="0.46" ry="0.23" transform="rotate(-50 -0.47 -0.42)" fill="url(#hl)"/></g><g transform="translate(504.00,585.94) scale(10.904)"><circle r="1" fill="url(#sg)"/><ellipse cx="-0.47" cy="-0.42" rx="0.46" ry="0.23" transform="rotate(-50 -0.47 -0.42)" fill="url(#hl)"/></g><g transform="translate(546.11,588.20) scale(10.946)"><circle r="1" fill="url(#sg)"/><ellipse cx="-0.47" cy="-0.42" rx="0.46" ry="0.23" transform="rotate(-50 -0.47 -0.42)" fill="url(#hl)"/></g><g transform="translate(480.36,592.87) scale(11.105)"><circle r="1" fill="url(#sg)"/><ellipse cx="-0.47" cy="-0.42" rx="0.46" ry="0.23" transform="rotate(-50 -0.47 -0.42)" fill="url(#hl)"/></g><g transform="translate(523.16,595.20) scale(11.148)"><circle r="1" fill="url(#sg)"/><ellipse cx="-0.47" cy="-0.42" rx="0.46" ry="0.23" transform="rotate(-50 -0.47 -0.42)" fill="url(#hl)"/></g><g transform="translate(566.28,597.54) scale(11.191)"><circle r="1" fill="url(#sg)"/><ellipse cx="-0.47" cy="-0.42" rx="0.46" ry="0.23" transform="rotate(-50 -0.47 -0.42)" fill="url(#hl)"/></g><g transform="translate(499.34,602.45) scale(11.358)"><circle r="1" fill="url(#sg)"/><ellipse cx="-0.47" cy="-0.42" rx="0.46" ry="0.23" transform="rotate(-50 -0.47 -0.42)" fill="url(#hl)"/></g><g transform="translate(543.18,604.87) scale(11.403)"><circle r="1" fill="url(#sg)"/><ellipse cx="-0.47" cy="-0.42" rx="0.46" ry="0.23" transform="rotate(-50 -0.47 -0.42)" fill="url(#hl)"/></g><g transform="translate(519.19,612.49) scale(11.623)"><circle r="1" fill="url(#sg)"/><ellipse cx="-0.47" cy="-0.42" rx="0.46" ry="0.23" transform="rotate(-50 -0.47 -0.42)" fill="url(#hl)"/></g><g transform="translate(540.00,623.00) scale(11.900)"><circle r="1" fill="url(#sg)"/><ellipse cx="-0.47" cy="-0.42" rx="0.46" ry="0.23" transform="rotate(-50 -0.47 -0.42)" fill="url(#hl)"/></g><path d="M386.6,659.3 L386.6,635.7 M391.1,641.7 L386.6,635.7 L382.1,641.7" stroke="#6a6aff" stroke-width="1.3" fill="none"/><text x="386.6" y="636" fill="#6a6aff" font-size="12" font-family="Liberation Sans" text-anchor="middle">z</text><path d="M386.6,659.3 L403.2,647.2 M401.0,654.4 L403.2,647.2 L395.7,647.1" stroke="#19d219" stroke-width="1.3" fill="none"/><text x="409" y="648" fill="#19d219" font-size="12" font-family="Liberation Sans" text-anchor="middle">y</text><path d="M386.6,659.3 L409.7,668.3 M402.5,670.3 L409.7,668.3 L405.7,661.9" stroke="#ff1a1a" stroke-width="1.3" fill="none"/><text x="415" y="676" fill="#ff1a1a" font-size="12" font-family="Liberation Sans" text-anchor="middle">x</text></g></svg><div class="t" style="left:4.70px;top:73.83px;font-size:13.2px;color:#f4f4f4;font-weight:normal;transform-origin:0 12.57px;transform:scaleY(1.02);">Top</div><div class="t" style="left:347.22px;top:73.83px;font-size:13.2px;color:#f4f4f4;font-weight:normal;transform-origin:0 12.57px;transform:scaleY(1.02);">Front</div><div class="t" style="left:3.92px;top:390.13px;font-size:13.2px;color:#f4f4f4;font-weight:normal;transform-origin:0 12.57px;transform:scaleY(1.02);">Left</div><div class="t" style="left:347.21px;top:390.11px;font-size:13.24px;color:#f4f4f4;font-weight:normal;transform-origin:0 12.59px;transform:scaleY(1.02);">Perspective</div><div class="r" style="left:512px;top:40px;width:65px;height:17px;background:#2b2b2b;border-bottom:1px solid #4a4a4a;box-sizing:border-box"></div><div class="t" style="left:512.38px;top:40.65px;font-size:13.14px;color:#6f6f6f;font-weight:normal;transform-origin:0 12.55px;transform:scaleY(1.04);">Quick co...</div><div class="t" style="left:589.14px;top:40.71px;font-size:12.95px;color:#ececec;font-weight:normal;transform-origin:0 12.49px;transform:scaleY(1.05);">Pipelines:</div><div class="r" style="left:660.5px;top:37px;width:356.3px;height:20.2px;background:#6b6b6b;border-radius:5.5px"></div><svg class="r" style="left:674px;top:38px" width="16" height="20" viewBox="0 0 16 20"><path d="M7,3 L7,16" stroke="#e6e6e6" stroke-width="1.6"/><circle cx="7" cy="3.6" r="2.6" fill="#e6e6e6"/><circle cx="7" cy="9.6" r="2.6" fill="#e6e6e6"/><circle cx="7" cy="15.6" r="2.6" fill="#e6e6e6"/></svg><div class="t" style="left:695.96px;top:40.49px;font-size:13.59px;color:#ececec;font-weight:normal;transform-origin:0 12.71px;transform:scaleY(1.0);">hardspheres-hexagon-edmd.xyz [XYZ]</div><div class="r" style="left:999px;top:38.9px;width:16.2px;height:16.9px;background:#0a6fe0;border-radius:4px"></div><svg class="r" style="left:999px;top:38.9px" width="16.2" height="16.9" viewBox="0 0 16.2 16.9"><path d="M4.8999999999999995,6.85 L8.1,3.8499999999999996 L11.3,6.85 M4.8999999999999995,10.049999999999999 L8.1,13.049999999999999 L11.3,10.049999999999999" stroke="#fff" stroke-width="1.5" fill="none" stroke-linecap="round" stroke-linejoin="round"/></svg><div class="r" style="left:688.2px;top:69px;width:336px;height:727px;background:#3a3a3a;"></div><div class="r" style="left:687px;top:69px;width:1.2px;height:727px;background:#7c7c7c;"></div><div class="r" style="left:689px;top:69px;width:335px;height:1.5px;background:#5a5a5a;"></div><div class="r" style="left:689px;top:70.5px;width:335px;height:22.2px;background:#2b2b2b;"></div><div class="r" style="left:689px;top:70.5px;width:78.3px;height:22.2px;background:#3c3c3c;"></div><div class="r" style="left:767.3px;top:70.5px;width:1.2px;height:22.2px;background:#606060;"></div><div class="r" style="left:847.3px;top:70.5px;width:1.2px;height:22.2px;background:#606060;"></div><div class="r" style="left:927.6px;top:70.5px;width:1.2px;height:22.2px;background:#606060;"></div><div class="r" style="left:1007.6px;top:70.5px;width:1.2px;height:22.2px;background:#606060;"></div><div class="r" style="left:689px;top:92.7px;width:335px;height:1.2px;background:#151515;"></div><svg class="r" style="left:0;top:0" width="1024" height="100" viewBox="0 0 1024 100"><g fill="none" stroke="#e1e1e1" stroke-width="1.3"><circle cx="702.7" cy="75.4" r="1.9"/><circle cx="702.7" cy="86.4" r="1.9"/><circle cx="709.9" cy="77.6" r="1.9"/><path d="M702.7,77.3 L702.7,84.5 M702.7,82.6 Q703.2,81.2 706.5,80.8 Q709.6,80.4 709.9,79.5"/></g><path d="M781.6,76 L784.3,76 L785,74.4 Q785.3,73.9 786,73.9 L790.6,73.9 Q791.3,73.9 791.6,74.4 L792.3,76 L794.8,76 Q796.3,76 796.3,77.5 L796.3,86.4 Q796.3,87.9 794.8,87.9 L781.6,87.9 Q780.1,87.9 780.1,86.4 L780.1,77.5 Q780.1,76 781.6,76 Z" fill="#e1e1e1"/><circle cx="788.2" cy="81.8" r="3.3" fill="none" stroke="#333" stroke-width="1.1"/><path d="M868.3,73.9 L874.3,78.6 L868.3,83.2 L862.3,78.6 Z" fill="#e1e1e1"/><path d="M862.6,82.3 L868.3,86.6 L874,82.3" fill="none" stroke="#e1e1e1" stroke-width="1.6"/><g stroke="#e1e1e1" stroke-width="2.1" stroke-linecap="round"><path d="M943.4,86 L951,78.2"/><path d="M949.6,81.6 L953.3,85.5"/></g><circle cx="952.4" cy="76.7" r="2.9" fill="#e1e1e1"/><circle cx="953.3" cy="75.8" r="1.2" fill="#2b2b2b"/><path d="M953.2,74.8 L956,72.6 L956.6,75.4 Z" fill="#2b2b2b"/><path d="M942,79.6 L945.2,76.4 Q947,74.8 949,75.2 L948.2,76.6 L949.6,78.6 L947.4,80.9 L945.8,79.4 L943.9,81.3 Z" fill="#e1e1e1"/></svg><div class="r" style="left:694px;top:98px;width:319.6px;height:20.2px;background:#6b6b6b;border-radius:5.5px"></div><div class="t" style="left:702.57px;top:100.32px;font-size:13.5px;color:#ececec;font-weight:normal;transform-origin:0 12.68px;transform:scaleY(1.0);">Add modification...</div><div class="r" style="left:996px;top:99.9px;width:16.2px;height:16.8px;background:#0a6fe0;border-radius:4px"></div><svg class="r" style="left:996px;top:99.9px" width="16.2" height="16.8" viewBox="0 0 16.2 16.8"><path d="M4.8999999999999995,6.800000000000001 L8.1,3.8000000000000007 L11.3,6.800000000000001 M4.8999999999999995,10.0 L8.1,13.0 L11.3,10.0" stroke="#fff" stroke-width="1.5" fill="none" stroke-linecap="round" stroke-linejoin="round"/></svg><div class="r" style="left:691px;top:126px;width:294px;height:259px;background:#1a1a1a;box-sizing:border-box;border:1px solid #2a2a2a"></div><div class="r" style="left:692px;top:127px;width:292px;height:14px;background:#3b3b3b;"></div><div class="t" style="left:688px;top:125.43px;width:300px;text-align:center;font-size:10.88px;color:#8c89f2;font-weight:normal;transform-origin:0 11.77px;transform:scaleY(1.0);">Visual elements</div><div class="r" style="left:699.2px;top:146.8px;width:14px;height:14px;background:#0b74e8;border-radius:3px"></div><svg class="r" style="left:699.2px;top:146.8px" width="14" height="14" viewBox="0 0 14 14"><path d="M3.2,7.4 L6,10.2 L10.8,3.4" stroke="#fff" stroke-width="1.9" fill="none" stroke-linecap="round" stroke-linejoin="round"/></svg><div class="r" style="left:699.2px;top:172.8px;width:14px;height:14px;background:#0b74e8;border-radius:3px"></div><svg class="r" style="left:699.2px;top:172.8px" width="14" height="14" viewBox="0 0 14 14"><path d="M3.2,7.4 L6,10.2 L10.8,3.4" stroke="#fff" stroke-width="1.9" fill="none" stroke-linecap="round" stroke-linejoin="round"/></svg><div class="t" style="left:753.48px;top:145.98px;font-size:12.48px;color:#ececec;font-weight:normal;transform-origin:0 12.32px;transform:scaleY(1.03);">Particles</div><div class="t" style="left:753.93px;top:171.64px;font-size:12.57px;color:#ececec;font-weight:normal;transform-origin:0 12.36px;transform:scaleY(1.03);">Simulation cell</div><div class="r" style="left:692px;top:193px;width:292px;height:13.5px;background:#3b3b3b;"></div><div class="t" style="left:688px;top:191.63px;width:300px;text-align:center;font-size:10.87px;color:#8c89f2;font-weight:normal;transform-origin:0 11.77px;transform:scaleY(1.0);">Data source</div><div class="t" style="left:724.31px;top:211.55px;font-size:12.84px;color:#ececec;font-weight:normal;transform-origin:0 12.45px;transform:scaleY(1.03);">hardspheres-hexagon-edmd.xyz [XYZ]</div><div class="r" style="left:692px;top:231.6px;width:292px;height:27px;background:#414141;"></div><div class="t" style="left:737.65px;top:238.06px;font-size:12.82px;color:#ececec;font-weight:normal;transform-origin:0 12.44px;transform:scaleY(1.03);">Particle types</div><div class="t" style="left:738.13px;top:263.83px;font-size:12.6px;color:#ececec;font-weight:normal;transform-origin:0 12.37px;transform:scaleY(1.03);">Simulation cell</div><div class="r" style="left:729px;top:227.2px;width:103px;height:34.2px;box-sizing:border-box;border:3px solid #ee3214;border-radius:12px"></div><svg class="r" style="left:985px;top:120px" width="39" height="220" viewBox="0 0 39 220"><rect x="9.5" y="12" width="18.9" height="2.8" rx="0.6" fill="#999999"/><rect x="14.8" y="10.6" width="8.3" height="2.2" rx="1" fill="#999999"/><path d="M10.8,15.8 L27.1,15.8 L27.1,32.4 Q27.1,34.9 24.6,34.9 L13.3,34.9 Q10.8,34.9 10.8,32.4 Z" fill="#999999"/><path d="M5,47.6 L35,47.6" stroke="#6c6c6c" stroke-width="1" stroke-dasharray="1.4 2.2"/><path d="M11.4,74.8 L19.1,67.3 L26.3,74.8" stroke="#999999" stroke-width="2.6" fill="none"/><path d="M11.4,106.2 L19.1,113.8 L26.3,106.2" stroke="#999999" stroke-width="2.6" fill="none"/><path d="M5,135.7 L35,135.7" stroke="#6c6c6c" stroke-width="1" stroke-dasharray="1.4 2.2"/><path d="M7.1,152.9 L31,152.9 M15.2,159.6 L31,159.6 M15.2,166.4 L31,166.4" stroke="#999999" stroke-width="2.6"/><rect x="8.1" y="187.2" width="22" height="22.6" rx="2.6" fill="#e1e1e1"/><circle cx="18.9" cy="188.2" r="2.9" fill="#e1e1e1"/><circle cx="18.9" cy="188.4" r="1.1" fill="#3a3a3a"/><path d="M13.1,193.6 L25.1,193.6 M13.1,198.5 L25.1,198.5 M13.1,203.5 L21.3,203.5" stroke="#3a3a3a" stroke-width="2"/></svg><div class="r" style="left:853.6px;top:386px;width:6px;height:6px;background:#555555;border-radius:50%"></div><div class="r" style="left:695.5px;top:392.3px;width:307px;height:108.7px;background:#1a1a1a;"></div><div class="r" style="left:1006.7px;top:393px;width:16px;height:400px;background:#474747;border-left:1px solid #525252;box-sizing:border-box"></div><div class="r" style="left:1010.7px;top:511.3px;width:8.5px;height:278.5px;background:#a9a9a9;border-radius:4.5px"></div><div class="t" style="left:705.62px;top:503.57px;font-size:11.93px;color:#e6e6e6;font-weight:normal;transform-origin:0 12.13px;transform:scaleY(0.9);">Particle type</div><div class="r" style="left:699.3px;top:519.6px;width:299px;height:58.89999999999998px;box-sizing:border-box;border:1px solid #4c4c4c;border-radius:5px;background:#3e3e3e"></div><div class="t" style="left:705.53px;top:526.88px;font-size:13.05px;color:#ececec;font-weight:normal;transform-origin:0 12.52px;transform:scaleY(1.06);">Numeric ID:</div><div class="t" style="left:784.49px;top:526.83px;font-size:13.2px;color:#ececec;font-weight:normal;transform-origin:0 12.57px;transform:scaleY(1.06);">1</div><div class="t" style="left:705.55px;top:553.46px;font-size:12.81px;color:#ececec;font-weight:normal;transform-origin:0 12.44px;transform:scaleY(1.06);">Name:</div><div class="r" style="left:786.3px;top:552px;width:204.3px;height:17.5px;background:#262626;"></div><div class="t" style="left:786.83px;top:553.33px;font-size:13.2px;color:#ececec;font-weight:normal;transform-origin:0 12.57px;transform:scaleY(1.06);">C</div><div class="t" style="left:706.58px;top:581.69px;font-size:11.58px;color:#e6e6e6;font-weight:normal;transform-origin:0 12.01px;transform:scaleY(0.92);">Appearance</div><div class="r" style="left:699.3px;top:597.5px;width:299px;height:103.5px;box-sizing:border-box;border:1px solid #4c4c4c;border-radius:5px;background:#3e3e3e"></div><div class="t" style="left:705.94px;top:608.00px;font-size:13.0px;color:#ececec;font-weight:normal;transform-origin:0 12.50px;transform:scaleY(1.06);">Color:</div><div class="r" style="left:802.6px;top:604.3px;width:160.3px;height:21.3px;background:#a1a1a1;box-sizing:border-box;border-right:1.5px solid #cfcfcf;border-bottom:1.5px solid #cfcfcf"></div><div class="r" style="left:981px;top:610px;width:2px;height:10px;background:repeating-linear-gradient(#dedede 0 2px, transparent 2px 4px)"></div><div class="t" style="left:705.52px;top:639.14px;font-size:13.17px;color:#ececec;font-weight:normal;transform-origin:0 12.56px;transform:scaleY(1.06);">Display radius:</div><div class="r" style="left:799.1px;top:633px;width:150.9px;height:27px;background:#262626;box-sizing:border-box;border:4px solid #0a86b4;border-radius:3px"></div><div class="t" style="left:803.68px;top:639.13px;font-size:13.2px;color:#ffffff;font-weight:normal;transform-origin:0 12.57px;transform:scaleY(1.06);">0.5</div><svg class="r" style="left:946.5px;top:635px" width="20" height="24" viewBox="-4 -1 20 24"><rect x="0" y="0" width="12" height="20.5" fill="#343434"/><path d="M0.2,8 L5.5,2.2 L10.8,8 Z M0.2,13 L5.5,19 L10.8,13 Z" fill="#f2f2f2"/><path d="M-3,9.6 L12.5,9.6 M-3,20.6 L12.5,20.6 M12.5,0 L12.5,21" stroke="#d6d6d6" stroke-width="1.1" fill="none"/></svg><div class="r" style="left:981px;top:641.5px;width:2px;height:10px;background:repeating-linear-gradient(#dedede 0 2px, transparent 2px 4px)"></div><div class="r" style="left:795.6px;top:630.2px;width:102px;height:34.4px;box-sizing:border-box;border:3px solid #ee3214;border-radius:11px"></div><div class="t" style="left:706.02px;top:672.61px;font-size:12.68px;color:#ececec;font-weight:normal;transform-origin:0 12.39px;transform:scaleY(1.06);">Shape:</div><div class="r" style="left:805px;top:669.6px;width:182.8px;height:20px;background:#6b6b6b;border-radius:5.5px"></div><div class="t" style="left:813.15px;top:671.90px;font-size:13.85px;color:#ececec;font-weight:normal;transform-origin:0 12.80px;transform:scaleY(1.0);">&lsaquo;unspecified&rsaquo;</div><div class="r" style="left:970px;top:671.5px;width:16.2px;height:16.2px;background:#0a6fe0;border-radius:4px"></div><svg class="r" style="left:970px;top:671.5px" width="16.2" height="16.2" viewBox="0 0 16.2 16.2"><path d="M4.8999999999999995,6.5 L8.1,3.5 L11.3,6.5 M4.8999999999999995,9.7 L8.1,12.7 L11.3,9.7" stroke="#fff" stroke-width="1.5" fill="none" stroke-linecap="round" stroke-linejoin="round"/></svg><div class="t" style="left:705.72px;top:703.38px;font-size:11.89px;color:#e6e6e6;font-weight:normal;transform-origin:0 12.12px;transform:scaleY(0.92);">Physical properties</div><div class="r" style="left:699.3px;top:719.4px;width:299px;height:66.20000000000005px;box-sizing:border-box;border:1px solid #4c4c4c;border-radius:5px;background:#3e3e3e"></div><div class="t" style="left:705.66px;top:729.43px;font-size:12.62px;color:#ececec;font-weight:normal;transform-origin:0 12.37px;transform:scaleY(1.06);">Mass:</div><div class="r" style="left:844px;top:727.8px;width:102px;height:17.7px;background:#262626;"></div><div class="t" style="left:844.33px;top:729.30px;font-size:12.7px;color:#ececec;font-weight:normal;transform-origin:0 12.40px;transform:scaleY(1.1);">12.0107</div><svg class="r" style="left:946.5px;top:725px" width="20" height="24" viewBox="-4 -1 20 24"><rect x="0" y="0" width="12" height="20.5" fill="#343434"/><path d="M0.2,8 L5.5,2.2 L10.8,8 Z M0.2,13 L5.5,19 L10.8,13 Z" fill="#f2f2f2"/><path d="M-3,9.6 L12.5,9.6 M-3,20.6 L12.5,20.6 M12.5,0 L12.5,21" stroke="#d6d6d6" stroke-width="1.1" fill="none"/></svg><div class="r" style="left:981px;top:731.5px;width:2px;height:10px;background:repeating-linear-gradient(#dedede 0 2px, transparent 2px 4px)"></div><div class="t" style="left:706.64px;top:759.88px;font-size:13.04px;color:#ececec;font-weight:normal;transform-origin:0 12.52px;transform:scaleY(1.06);">Van der Waals radius:</div><div class="r" style="left:844px;top:758.5px;width:102px;height:17.3px;background:#262626;"></div><div class="t" style="left:844.33px;top:760.30px;font-size:12.7px;color:#ececec;font-weight:normal;transform-origin:0 12.40px;transform:scaleY(1.1);">1.7</div><svg class="r" style="left:946.5px;top:756.1px" width="20" height="24" viewBox="-4 -1 20 24"><rect x="0" y="0" width="12" height="20.5" fill="#343434"/><path d="M0.2,8 L5.5,2.2 L10.8,8 Z M0.2,13 L5.5,19 L10.8,13 Z" fill="#f2f2f2"/><path d="M-3,9.6 L12.5,9.6 M-3,20.6 L12.5,20.6 M12.5,0 L12.5,21" stroke="#d6d6d6" stroke-width="1.1" fill="none"/></svg><div class="r" style="left:981px;top:762.5px;width:2px;height:10px;background:repeating-linear-gradient(#dedede 0 2px, transparent 2px 4px)"></div><div class="r" style="left:1px;top:702px;width:686px;height:94px;background:#383838;"></div><div class="r" style="left:226.8px;top:701.6px;width:194.8px;height:20px;border-radius:6px;background:#6b6b6b;overflow:hidden"><div class="r" style="left:0;top:0;width:73.2px;height:20px;background:#0a6fe0"></div></div><div class="t" style="left:235.21px;top:704.01px;font-size:13.26px;color:#ffffff;font-weight:normal;transform-origin:0 12.59px;transform:scaleY(1.0);">Particles</div><div class="t" style="left:311.21px;top:703.87px;font-size:13.65px;color:#ececec;font-weight:normal;transform-origin:0 12.73px;transform:scaleY(1.0);">Global Attributes</div><svg class="r" style="left:668px;top:704px" width="16" height="12" viewBox="0 0 16 12"><path d="M3.6,8.4 L7.6,4.6 L11.6,8.4" stroke="#dedede" stroke-width="1.5" fill="none"/></svg><div class="r" style="left:1px;top:723.5px;width:686px;height:1.2px;background:#2a2a2a;"></div><svg class="r" style="left:0;top:724px" width="362" height="72" viewBox="0 0 362 72"><rect x="45.00" y="24" width="1.6" height="15.3" fill="#9a98b6"/><rect x="61.92" y="24" width="1.6" height="7.7" fill="#9a98b6"/><rect x="78.84" y="24" width="1.6" height="7.7" fill="#9a98b6"/><rect x="95.76" y="24" width="1.6" height="7.7" fill="#9a98b6"/><rect x="112.68" y="24" width="1.6" height="7.7" fill="#9a98b6"/><rect x="129.60" y="24" width="1.6" height="15.3" fill="#9a98b6"/><rect x="146.52" y="24" width="1.6" height="7.7" fill="#9a98b6"/><rect x="163.44" y="24" width="1.6" height="7.7" fill="#9a98b6"/><rect x="180.36" y="24" width="1.6" height="7.7" fill="#9a98b6"/><rect x="197.28" y="24" width="1.6" height="7.7" fill="#9a98b6"/><rect x="214.20" y="24" width="1.6" height="15.3" fill="#9a98b6"/><rect x="231.12" y="24" width="1.6" height="7.7" fill="#9a98b6"/><rect x="248.04" y="24" width="1.6" height="7.7" fill="#9a98b6"/><rect x="264.96" y="24" width="1.6" height="7.7" fill="#9a98b6"/><rect x="281.88" y="24" width="1.6" height="7.7" fill="#9a98b6"/><rect x="298.80" y="24" width="1.6" height="15.3" fill="#9a98b6"/><path d="M43.3,24 L48.3,24 L45.8,27 Z" fill="#0000e0"/></svg><div class="r" style="left:2px;top:726px;width:89px;height:22px;background:#575757;box-sizing:border-box;border-right:1.2px solid #b8b8b8;border-bottom:1.2px solid #b8b8b8"></div><div class="t" style="left:25.19px;top:729.55px;font-size:13.14px;color:#e6e6e6;font-weight:normal;transform-origin:0 12.55px;transform:scaleY(1.06);">0 / 319</div><div class="t" style="left:-20.400000000000006px;top:729.49px;width:300px;text-align:center;font-size:13.3px;color:#c4c1e4;font-weight:normal;transform-origin:0 12.61px;transform:scaleY(1.06);">100</div><div class="t" style="left:64.4px;top:729.49px;width:300px;text-align:center;font-size:13.3px;color:#c4c1e4;font-weight:normal;transform-origin:0 12.61px;transform:scaleY(1.06);">200</div><div class="t" style="left:149.5px;top:729.49px;width:300px;text-align:center;font-size:13.3px;color:#c4c1e4;font-weight:normal;transform-origin:0 12.61px;transform:scaleY(1.06);">300</div><div class="r" style="left:361px;top:724.7px;width:1.2px;height:70px;background:#2a2a2a;"></div><div class="r" style="left:573px;top:724.7px;width:1.2px;height:70px;background:#2a2a2a;"></div><div class="r" style="left:687px;top:701px;width:1.2px;height:95px;background:#7c7c7c;"></div><svg class="r" style="left:0;top:720px" width="700" height="76" viewBox="0 720 700 76"><rect x="371.3" y="735" width="3.2" height="16" rx="0.6" fill="#dedede"/><path d="M376.6,743 L388,735 L388,751 Z" fill="#dedede"/><path d="M404,727 L404,759" stroke="#5c5c5c" stroke-width="1" stroke-dasharray="1.4 1.6"/><path d="M531,727 L531,759" stroke="#5c5c5c" stroke-width="1" stroke-dasharray="1.4 1.6"/><path d="M416.2,743 L427.4,735 L427.4,751 Z M428.2,743 L439.3,735 L439.3,751 Z" fill="#dedede"/><path d="M462,733.8 L476.7,743 L462,752.2 Z" fill="#dedede"/><path d="M496,735.2 L507.3,743 L496,750.8 Z M507.8,735.2 L519.1,743 L507.8,750.8 Z" fill="#dedede"/><path d="M547.1,735 L558.9,743 L547.1,751 Z" fill="#dedede"/><rect x="560.8" y="735" width="3.2" height="16" rx="0.6" fill="#dedede"/><circle cx="373.3" cy="778.2" r="5.7" fill="#dedede"/><circle cx="373" cy="778.2" r="1.9" fill="#383838"/><path d="M377.5,775.8 L391.2,775.8 L391.2,780.4 L389.5,780.4 L389.5,784.1 L386.1,784.1 L386.1,780.4 L384.5,780.4 L384.5,782.6 L381.5,782.6 L381.5,780.4 L377.5,780.4 Z" fill="#dedede"/><circle cx="551.1" cy="778" r="9.8" fill="none" stroke="#dedede" stroke-width="2"/><path d="M550.6,772 L551.4,778.4 L555.8,781.6" fill="none" stroke="#dedede" stroke-width="1.7" stroke-linejoin="round"/><circle cx="588" cy="739.7" r="7.1" fill="none" stroke="#dedede" stroke-width="2.7"/><path d="M593.6,745.4 L601.3,752.8" stroke="#dedede" stroke-width="3"/><g fill="#dedede"><rect x="624.2" y="732.4" width="3.9" height="15" rx="1.95"/><rect x="628.8" y="730.4" width="3.9" height="16" rx="1.95"/><rect x="633.4" y="732.5" width="3.9" height="15" rx="1.95"/><rect x="638" y="736.6" width="3.9" height="12" rx="1.95"/><path d="M624.2,743 L641.9,743 L641.9,750 Q641.6,755.5 637.5,755.5 L628.2,755.5 Q626.5,755.5 625.3,754 L619.8,746.6 Q619,745 620.6,744.2 Q622,743.6 623.2,744.8 L624.6,746.4 Z"/></g><path d="M628.45,734 L628.45,742.2 M633.05,734 L633.05,742.2 M637.65,736.5 L637.65,742.2" stroke="#383838" stroke-width="0.7"/><ellipse cx="669.1" cy="741.8" rx="14.5" ry="7" fill="none" stroke="#dedede" stroke-width="1.6"/><circle cx="669.4" cy="742.2" r="4.6" fill="#dedede"/><path d="M659.2,733.8 L665.2,736.4 L660.6,739.4 Z M680.8,744.4 L674.8,747.2 L679.4,750 Z" fill="#dedede"/><path d="M577.1,770.3 L577.1,763.4 L583.9,763.4 M599,763.4 L605.8,763.4 L605.8,770.3 M577.1,785 L577.1,791.8 L583.9,791.8 M599,791.8 L605.8,791.8 L605.8,785" fill="none" stroke="#dedede" stroke-width="2"/><path d="M591.4,767 L602.9,771.6 L602.9,783.6 L592.4,788.8 L580.2,783.6 L580.2,771.6 Z" fill="#dedede"/><path d="M583.2,773 L591.4,770.2 L599.3,773.3 L591.4,776.4 Z M593.5,777.5 L600.1,775.8 L600.1,781.9 L593.5,785.2 Z" fill="#383838"/><path d="M620.1,766.5 L640.3,777.6 L620.1,789" fill="none" stroke="#dedede" stroke-width="2.6" stroke-linecap="round" stroke-linejoin="miter"/><path d="M629.6,773 Q626.6,777.8 629.6,782.6" fill="none" stroke="#dedede" stroke-width="1.4"/><path d="M657.2,766.4 L664.8000000000001,766.4 L657.2,774.0 Z" fill="#dedede"/><path d="M660.2,769.4 L665.6,774.8" stroke="#dedede" stroke-width="2.7"/><path d="M681.6,766.4 L674.0,766.4 L681.6,774.0 Z" fill="#dedede"/><path d="M678.6,769.4 L673.2,774.8" stroke="#dedede" stroke-width="2.7"/><path d="M657.2,789.9 L664.8000000000001,789.9 L657.2,782.3 Z" fill="#dedede"/><path d="M660.2,786.9 L665.6,781.5" stroke="#dedede" stroke-width="2.7"/><path d="M681.6,789.9 L674.0,789.9 L681.6,782.3 Z" fill="#dedede"/><path d="M678.6,786.9 L673.2,781.5" stroke="#dedede" stroke-width="2.7"/></svg><div class="r" style="left:403px;top:768.6px;width:111px;height:17.6px;background:#252525;border-bottom:1px solid #4a4a4a;box-sizing:border-box"></div><div class="t" style="left:403.28px;top:770.53px;font-size:13.2px;color:#f0f0f0;font-weight:normal;transform-origin:0 12.57px;transform:scaleY(1.08);">0</div><svg class="r" style="left:512.5px;top:767px" width="20" height="24" viewBox="-4 -1 20 24"><rect x="0" y="0" width="12" height="20.5" fill="#343434"/><path d="M0.2,8 L5.5,2.2 L10.8,8 Z M0.2,13 L5.5,19 L10.8,13 Z" fill="#f2f2f2"/><path d="M-3,9.6 L12.5,9.6 M-3,20.6 L12.5,20.6 M12.5,0 L12.5,21" stroke="#d6d6d6" stroke-width="1.1" fill="none"/></svg></div><div class="r" style="left:1px;top:0;width:1022px;height:795px;box-sizing:border-box;border:1px solid #707070;border-radius:10px;pointer-events:none"></div>
</body></html>
